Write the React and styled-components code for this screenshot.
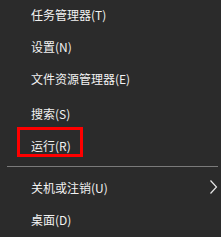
import styled, { createGlobalStyle } from "styled-components";

const Global = createGlobalStyle`
  html, body {
    margin: 0;
    padding: 0;
    background: #2b2b2b;
  }
`;

const Menu = styled.div`
  width: 221px;
  height: 237px;
  background: #2b2b2b;
  overflow: hidden;
  font-family: "Noto Sans CJK SC", "Noto Sans", sans-serif;
  font-size: 12px;
  color: #f2f2f2;
`;

const Item = styled.div`
  position: relative;
  display: flex;
  align-items: center;
  justify-content: space-between;
  height: 32px;
  margin-top: ${(p) => p.$gap || 0}px;
  padding: 0 3px 0 31px;
  white-space: nowrap;
`;

const Separator = styled.div`
  height: 1px;
  margin: 5px 3px 0 7px;
  background: #7a7a7a;
`;

const Highlight = styled.div`
  position: absolute;
  left: 17px;
  top: -2px;
  width: 60px;
  height: 24px;
  border: 3px solid #ff0000;
`;

const Chevron = () => (
  <svg width="9" height="14" viewBox="0 0 9 14">
    <polyline points="1.5,0.5 7.5,7 1.5,13.5" fill="none" stroke="#e6e6e6" strokeWidth="1.2" />
  </svg>
);

export default function App() {
  return (
    <Menu>
      <Global />
      <Item $gap={-2}>任务管理器(T)</Item>
      <Item>设置(N)</Item>
      <Item>文件资源管理器(E)</Item>
      <Item $gap={3}>搜索(S)</Item>
      <Item>
        运行(R)
        <Highlight />
      </Item>
      <Separator />
      <Item $gap={4}>
        关机或注销(U)
        <Chevron />
      </Item>
      <Item>桌面(D)</Item>
    </Menu>
  );
}
